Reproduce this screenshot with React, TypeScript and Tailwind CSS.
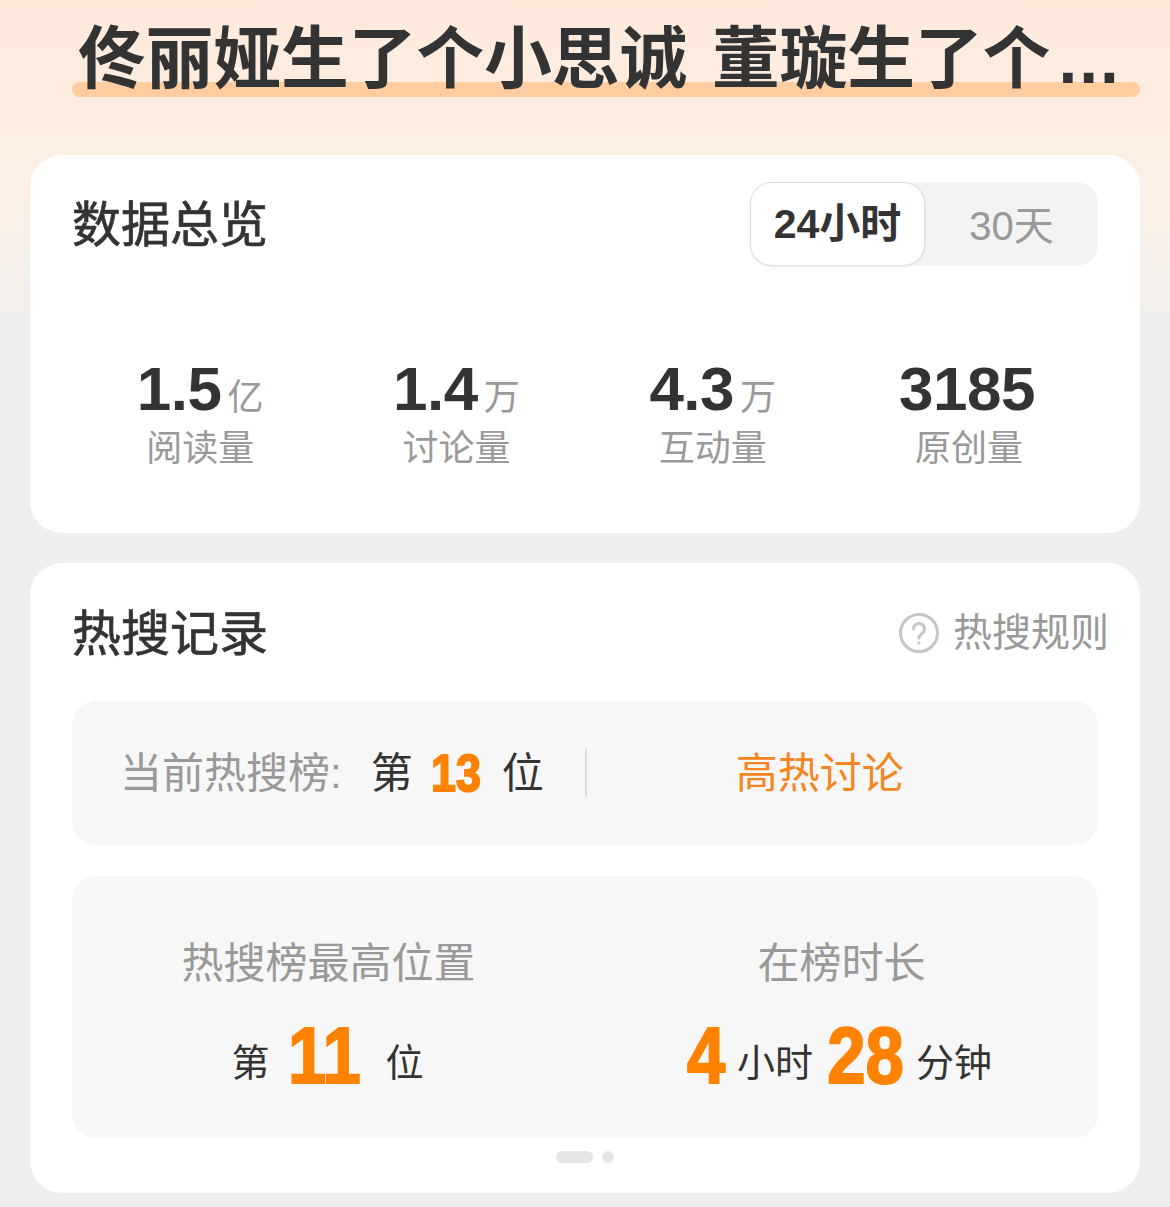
const FONT = "font-['Liberation_Sans','Noto_Sans_CJK_SC',sans-serif]";

function BigDigits({ children }: { children: string }) {
  return (
    <span className="inline-block origin-center scale-x-[0.86] font-bold text-[#ff8200] [-webkit-text-stroke:2px_#ff8200]">
      {children}
    </span>
  );
}

function Stat({ value, unit, label }: { value: string; unit?: string; label: string }) {
  return (
    <div className="flex flex-col items-center">
      <div className={unit ? "flex h-[60px] items-baseline justify-center" : "flex h-[60px] items-baseline justify-center pr-[4px]"}>
        <span className="text-[62px] leading-[62px] font-bold tracking-[-0.5px] text-[#333]">{value}</span>
        {unit && <span className="ml-[6px] text-[36px] leading-[40px] text-[#999]">{unit}</span>}
      </div>
      <span className="mt-[9px] text-[36px] leading-[44px] text-[#999]">{label}</span>
    </div>
  );
}

export default function App() {
  return (
    <div className={`${FONT} h-[1207px] w-[1170px] overflow-hidden bg-[linear-gradient(180deg,#feeadb_0px,#fdf0e4_180px,#efefef_340px)] px-[30px]`}>
      {/* Headline with marker stroke behind its baseline */}
      <div className="relative h-[155px]">
        <div className="absolute top-[82px] right-0 left-[42px] h-[15px] rounded-full bg-[#ffcd9f]" />
        <h1 className="relative pt-[22px] pl-[48px] text-[67.7px] leading-[76px] font-bold whitespace-nowrap text-[#333] [word-spacing:6px]">
          佟丽娅生了个小思诚 董璇生了个<span className="ml-[8px] tracking-[2px]">...</span>
        </h1>
      </div>

      <section className="h-[378px] rounded-[32px] bg-white px-[42px] pt-[27px]">
        <div className="flex items-center justify-between">
          <h2 className="pt-[3px] text-[49px] leading-[81px] font-normal text-[#333] [-webkit-text-stroke:0.7px_#333]">数据总览</h2>
          <div className="flex h-[84px] w-[348px] rounded-[22px] bg-[#f3f3f3]">
            <div className="flex w-[175px] items-center justify-center rounded-[22px] border border-[#dedede] bg-white pt-[2px] text-[41px] font-bold text-[#333] shadow-[0_1px_3px_rgba(0,0,0,0.08)]">
              24小时
            </div>
            <div className="flex flex-1 items-center justify-center pt-[3px] text-[40px] text-[#999]">30天</div>
          </div>
        </div>
        <div className="mt-[92px] grid grid-cols-[repeat(4,256.3px)]">
          <Stat value="1.5" unit="亿" label="阅读量" />
          <Stat value="1.4" unit="万" label="讨论量" />
          <Stat value="4.3" unit="万" label="互动量" />
          <Stat value="3185" label="原创量" />
        </div>
      </section>

      <section className="mt-[30px] h-[630px] rounded-[32px] bg-white px-[42px] pt-[40px]">
        <div className="flex items-center justify-between">
          <h2 className="pt-[2px] text-[49px] leading-[58px] font-normal text-[#333] [-webkit-text-stroke:0.7px_#333]">热搜记录</h2>
          <div className="-mr-[11px] flex items-center gap-[14px] text-[39px] leading-[60px] text-[#999]">
            <svg width="40" height="40" viewBox="0 0 40 40" fill="none" stroke="#c6c6c6" strokeWidth="3">
              <circle cx="20" cy="20" r="18.5" />
              <path d="M14.5 16a5.5 5.5 0 1 1 8.6 4.5c-2 1.4-3.1 2.4-3.1 4.5" strokeLinecap="round" />
              <circle cx="20" cy="30" r="1.2" fill="#c6c6c6" strokeWidth="1" />
            </svg>
            热搜规则
          </div>
        </div>

        <div className="mt-[38px] flex h-[144px] items-center rounded-[24px] bg-[#f7f7f7] pl-[48px] text-[42px]">
          <span className="text-[#999]">当前热搜榜:</span>
          <span className="ml-[29px] text-[#333]">第</span>
          <span className="ml-[13px] w-[60px] text-center text-[52px] leading-[60px]">
            <BigDigits>13</BigDigits>
          </span>
          <span className="ml-[16px] text-[#333]">位</span>
          <div className="ml-[41px] h-[48px] w-[2px] bg-[#dcdcdc]" />
          <span className="flex-1 pr-[45px] text-center text-[#f5861f]">高热讨论</span>
        </div>

        <div className="mt-[31px] grid h-[262px] grid-cols-2 rounded-[24px] bg-[#f7f7f7] pt-[62px]">
          <div className="flex flex-col items-center">
            <span className="text-[42px] leading-[52px] text-[#999]">热搜榜最高位置</span>
            <div className="mt-[31px] flex h-[70px] items-center pr-[2px] text-[38px] text-[#333]">
              <span className="pt-[14px]">第</span>
              <span className="ml-[12px] w-[80px] text-center text-[80px] leading-[70px]">
                <BigDigits>11</BigDigits>
              </span>
              <span className="ml-[24px] pt-[14px]">位</span>
            </div>
          </div>
          <div className="flex flex-col items-center pr-[5px]">
            <span className="pl-[5px] text-[42px] leading-[52px] text-[#999]">在榜时长</span>
            <div className="mt-[31px] flex h-[70px] items-center text-[38px] text-[#333]">
              <span className="-ml-[2px] w-[40px] text-center text-[80px] leading-[70px]">
                <BigDigits>4</BigDigits>
              </span>
              <span className="ml-[13px] pt-[14px]">小时</span>
              <span className="ml-[8px] w-[84px] text-center text-[80px] leading-[70px]">
                <BigDigits>28</BigDigits>
              </span>
              <span className="ml-[11px] pt-[14px]">分钟</span>
            </div>
          </div>
        </div>

        {/* Pager for the two record pages */}
        <div className="mt-[13px] flex justify-center gap-[9px]">
          <div className="h-[12px] w-[37px] rounded-full bg-[#e5e5e5]" />
          <div className="h-[12px] w-[12px] rounded-full bg-[#e5e5e5]" />
        </div>
      </section>
    </div>
  );
}
